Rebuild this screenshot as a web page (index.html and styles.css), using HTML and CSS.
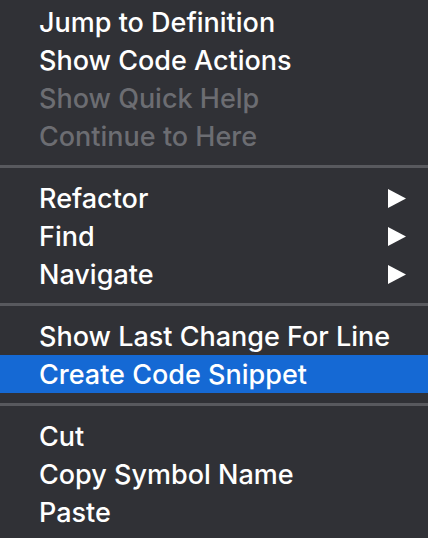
FILE: index.html
```html
<!DOCTYPE html>
<html>
<head>
<meta charset="utf-8">
<link rel="stylesheet" href="styles.css">
</head>
<body>
<div class="menu">
  <div class="item">Jump to Definition</div>
  <div class="item">Show Code Actions</div>
  <div class="item disabled">Show Quick Help</div>
  <div class="item disabled">Continue to Here</div>
  <div class="sep"></div>
  <div class="item"><span>Refactor</span><svg class="arrow" viewBox="0 0 18 19"><path d="M0 0 L18 9.5 L0 19 Z" fill="#fff"/></svg></div>
  <div class="item"><span>Find</span><svg class="arrow" viewBox="0 0 18 19"><path d="M0 0 L18 9.5 L0 19 Z" fill="#fff"/></svg></div>
  <div class="item"><span>Navigate</span><svg class="arrow" viewBox="0 0 18 19"><path d="M0 0 L18 9.5 L0 19 Z" fill="#fff"/></svg></div>
  <div class="sep"></div>
  <div class="item">Show Last Change For Line</div>
  <div class="item selected">Create Code Snippet</div>
  <div class="sep"></div>
  <div class="item">Cut</div>
  <div class="item">Copy Symbol Name</div>
  <div class="item">Paste</div>
</div>
</body>
</html>
```
FILE: styles.css
```css
html, body {
  margin: 0;
  padding: 0;
  background: #303136;
}
body {
  width: 428px;
  height: 538px;
  overflow: hidden;
  font-family: Inter, "Noto Sans", sans-serif;
}
.menu {
  display: flex;
  flex-direction: column;
  padding-top: 3px;
}
.item {
  height: 38px;
  display: flex;
  align-items: center;
  justify-content: space-between;
  padding: 0 22px 0 39px;
  color: #ffffff;
  font-size: 27px;
  font-weight: 500;
  white-space: nowrap;
}
.item.disabled {
  color: #6c6d72;
}
.item.selected {
  background: #1569d4;
}
.arrow {
  width: 18px;
  height: 19px;
}
.sep {
  height: 3px;
  margin: 10px 0 11px;
  background: #58595e;
}
```
